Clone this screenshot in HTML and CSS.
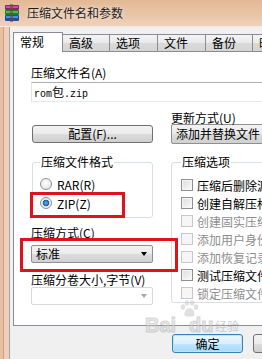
FILE: index.html
```html
<!DOCTYPE html>
<html>
<head>
<meta charset="utf-8">
<link rel="stylesheet" href="styles.css">
</head>
<body>
<div class="window">
  <div class="titlebar">
    <svg class="app-icon" width="16" height="18" viewBox="0 0 16 18">
      <rect x="1" y="1" width="14" height="5" rx="1" fill="#8a2468"/>
      <rect x="2" y="2" width="12" height="2" fill="#c9509a"/>
      <rect x="1" y="6" width="14" height="5" rx="1" fill="#237a30"/>
      <rect x="2" y="7" width="12" height="2" fill="#55b957"/>
      <rect x="1" y="11" width="14" height="6" rx="1" fill="#1f4f9e"/>
      <rect x="2" y="12" width="12" height="2" fill="#4f8fe0"/>
      <rect x="6" y="0" width="3" height="18" fill="#6b4a2a" opacity=".55"/>
    </svg>
    <span class="title">压缩文件名和参数</span>
  </div>
  <div class="main">
    <div class="frame-left"></div>
    <div class="dialog">
      <div class="tabs">
        <div class="tab active">常规</div>
        <div class="tab w48">高级</div>
        <div class="tab">选项</div>
        <div class="tab">文件</div>
        <div class="tab w48">备份</div>
        <div class="tab">时间</div>
      </div>
      <div class="panel">
        <div class="label first">压缩文件名(A)</div>
        <div class="textbox"><span class="mono">rom<span class="cjk">包</span>.zip</span></div>
        <div class="row">
          <div class="col-left">
            <div class="button config">配置(F)...</div>
          </div>
          <div class="col-right">
            <div class="label small">更新方式(U)</div>
            <div class="combo wide"><span>添加并替换文件</span><span class="arrow"></span></div>
          </div>
        </div>
        <div class="row row3">
          <div class="col-left">
            <fieldset class="group format">
              <legend>压缩文件格式</legend>
              <div class="radio-row first"><span class="radio"></span><span>RAR(R)</span></div>
              <div class="radio-row"><span class="radio checked"></span><span>ZIP(Z)</span></div>
            </fieldset>
            <div class="label method">压缩方式(C)</div>
            <div class="combo method-combo"><span>标准</span><span class="arrow"></span></div>
            <div class="label volume">压缩分卷大小,字节(V)</div>
            <div class="combo disabled"><span></span><span class="arrow"></span></div>
          </div>
          <div class="col-right">
            <fieldset class="group options">
              <legend>压缩选项</legend>
              <div class="check-row first"><span class="check"></span><span>压缩后删除源文件</span></div>
              <div class="check-row"><span class="check"></span><span>创建自解压格式压缩文件</span></div>
              <div class="check-row disabled"><span class="check"></span><span>创建固实压缩文件</span></div>
              <div class="check-row disabled"><span class="check"></span><span>添加用户身份校验信息</span></div>
              <div class="check-row disabled"><span class="check"></span><span>添加恢复记录</span></div>
              <div class="check-row"><span class="check"></span><span>测试压缩文件</span></div>
              <div class="check-row disabled"><span class="check"></span><span>锁定压缩文件</span></div>
            </fieldset>
          </div>
        </div>
      </div>
      <div class="buttons">
        <div class="button ok">确定</div>
        <div class="button cancel">取消</div>
      </div>
    </div>
  </div>
  <div class="mark mark-zip"></div>
  <div class="mark mark-method"></div>
  <div class="watermark">
    <svg class="paw" width="20" height="18" viewBox="0 0 20 18">
      <ellipse cx="4" cy="7" rx="2.2" ry="2.8" fill="#c8c8c8"/>
      <ellipse cx="8" cy="3" rx="2.2" ry="2.8" fill="#c8c8c8"/>
      <ellipse cx="13" cy="3" rx="2.2" ry="2.8" fill="#c8c8c8"/>
      <ellipse cx="17" cy="7" rx="2.2" ry="2.8" fill="#c8c8c8"/>
      <path d="M10.5 8 C7 8 5 12 5.5 15 C6 17 9 16.5 10.5 16.5 C12 16.5 15 17 15.5 15 C16 12 14 8 10.5 8Z" fill="#c8c8c8"/>
    </svg>
    <span class="wm-bai">Bai</span><span class="wm-du">du</span><span class="wm-jy">经验</span>
  </div>
</div>
</body>
</html>
```
FILE: styles.css
```css
* { box-sizing: border-box; }
html, body { margin: 0; padding: 0; }
body {
  width: 262px;
  height: 359px;
  overflow: hidden;
  font-family: "Noto Sans CJK SC", "Noto Sans", sans-serif;
  font-size: 12px;
  color: #000;
  background: #f0f0f0;
}
.window {
  position: relative;
  width: 262px;
  height: 359px;
  overflow: hidden;
  display: flex;
  flex-direction: column;
  background: #e9c7aa;
}
.titlebar {
  height: 27px;
  flex: none;
  display: flex;
  align-items: center;
  gap: 7px;
  padding: 0 0 1px 4px;
  background: linear-gradient(#e3b995, #e9c6a9 60%, #eed2bc);
  border-bottom: 1px solid #f5e9df;
}
.app-icon { flex: none; }
.title {
  font-size: 12px;
  line-height: 14px;
  color: #1e1e1e;
  text-shadow: 0 0 5px rgba(255, 255, 255, .8);
}
.main { flex: 1; display: flex; min-height: 0; }
.frame-left {
  width: 10px;
  flex: none;
  background: linear-gradient(90deg, #e7c0a5 0, #e7c0a5 3px, #d49c7c 3px, #d49c7c 4px, #eed1bd 4px, #eed1bd 9px, #a3a3a3 9px);
}
.dialog {
  width: 340px;
  flex: none;
  padding-left: 3px;
  display: flex;
  flex-direction: column;
  background: #f0f0f0;
}
.tabs {
  height: 24px;
  flex: none;
  display: flex;
  align-items: flex-end;
}
.tab {
  width: 49px;
  height: 17px;
  flex: none;
  margin-left: -1px;
  padding-left: 6px;
  border: 1px solid #898c95;
  border-bottom: none;
  background: linear-gradient(#f4f4f4, #e9e9e9 50%, #dadada 50%, #d4d4d4);
  line-height: 15px;
  white-space: nowrap;
}
.tab.w48 { width: 48px; }
.tab.active {
  width: 50px;
  height: 20px;
  margin-left: 0;
  margin-bottom: -1px;
  background: #fff;
  position: relative;
  z-index: 1;
  line-height: 15px;
  padding-top: 1px;
}
.panel {
  height: 275px;
  flex: none;
  background: #fff;
  border: 1px solid #898c95;
  padding: 0 0 0 17px;
}
.label {
  height: 14px;
  line-height: 14px;
  white-space: nowrap;
}
.label.first { margin-top: 14px; }
.label.small { height: 12px; line-height: 11px; }
.label.method { margin-top: 8px; }
.label.volume { margin-top: 10px; }
.textbox {
  margin-top: 2px;
  height: 20px;
  width: 300px;
  border: 1px solid;
  border-color: #abadb3 #dbdfe6 #e3e9ef #e2e3ea;
  padding-left: 2px;
  line-height: 18px;
}
.mono {
  font-family: "Liberation Mono", "Noto Sans CJK SC", monospace;
  font-size: 10px;
}
.cjk { font-family: "Noto Sans CJK SC", sans-serif; font-size: 12px; }
.row { display: flex; margin-top: 10px; }
.row.row3 { margin-top: 11px; }
.col-left { width: 122px; flex: none; }
.col-right { width: 200px; flex: none; margin-left: 18px; }
.button {
  height: 18px;
  border: 1px solid #707070;
  border-radius: 3px;
  background: linear-gradient(#f2f2f2, #ebebeb 50%, #dddddd 50%, #cfcfcf);
  display: flex;
  align-items: center;
  justify-content: center;
  line-height: 14px;
  white-space: nowrap;
}
.button.config { margin: 13px 0 0 1px; width: 121px; }
.combo {
  height: 18px;
  border: 1px solid #8e8f8f;
  border-radius: 2px;
  background: linear-gradient(#f2f2f2, #ebebeb 50%, #dddddd 50%, #d0d0d0);
  display: flex;
  align-items: center;
  justify-content: space-between;
  padding: 0 5px 0 4px;
  white-space: nowrap;
  line-height: 14px;
}
.combo.wide { height: 20px; width: 200px; }
.combo.method-combo { margin-top: 5px; }
.combo.disabled {
  background: #fff;
  border-color: #d9d9d9;
}
.arrow {
  width: 0;
  height: 0;
  border-left: 3.5px solid transparent;
  border-right: 3.5px solid transparent;
  border-top: 4px solid #000;
  flex: none;
}
.combo.disabled .arrow { border-top-color: #a5a5a5; }
.group {
  margin: 0;
  min-width: 0;
  border: 1px solid #d5dfe5;
  border-radius: 3px;
}
.group legend {
  padding: 0 1px;
  height: 14px;
  line-height: 14px;
  white-space: nowrap;
}
.group.format {
  margin-left: 1px;
  width: 121px;
  padding: 0 0 6px 7px;
}
.group.options {
  width: 180px;
  padding: 0 0 0 9px;
}
.radio-row {
  height: 16px;
  display: flex;
  align-items: center;
  gap: 5px;
  margin-top: 3px;
  white-space: nowrap;
}
.radio-row.first { margin-top: 7px; }
.radio {
  width: 12px;
  height: 12px;
  border-radius: 50%;
  border: 1px solid #8e8f8f;
  background: radial-gradient(circle at 45% 40%, #fff, #dedede);
  flex: none;
}
.radio.checked {
  background: radial-gradient(circle at 50% 50%, #63b3ee 0, #1a5fa6 3px, #e8e8e8 3.6px, #f4f4f4 6px);
}
.check-row {
  height: 18px;
  display: flex;
  align-items: center;
  gap: 4px;
  white-space: nowrap;
}
.check-row.first { margin-top: 7px; }
.check {
  width: 12px;
  height: 12px;
  flex: none;
  border: 1px solid #8e8f8f;
  background: linear-gradient(135deg, #dcdcdc, #fbfbfb);
  box-shadow: inset 0 0 0 1px #f6f6f6;
}
.check-row.disabled { color: #8d8d8d; }
.check-row.disabled .check {
  border-color: #c8c8c8;
  background: #f6f6f6;
  box-shadow: none;
}
.buttons {
  display: flex;
  gap: 10px;
  margin-top: 8px;
  padding-left: 159px;
}
.buttons .button { width: 71px; height: 19px; flex: none; }
.button.ok {
  border-color: #3c7fb1;
  box-shadow: inset 0 0 0 1px #bde6f8;
  background: linear-gradient(#eaf6fd, #d9f0fc 50%, #bee6fd 50%, #a7d9f5);
}
.mark {
  position: absolute;
  border: 3px solid #e0121c;
}
.mark-zip { left: 30px; top: 192px; width: 95px; height: 26px; }
.mark-method { left: 20px; top: 238px; width: 158px; height: 34px; }
.watermark {
  position: absolute;
  left: 143px;
  top: 300px;
  width: 100px;
  height: 40px;
  opacity: .55;
  font-family: "Liberation Sans", Arial, sans-serif;
}
.paw { position: absolute; left: 36px; top: 0; }
.wm-bai, .wm-du {
  position: absolute;
  top: 15px;
  font-size: 20px;
  font-weight: bold;
  color: #d6d6d6;
  -webkit-text-stroke: 1px #b4b4b4;
  line-height: 20px;
}
.wm-bai { left: 2px; }
.wm-du { left: 46px; }
.wm-jy {
  position: absolute;
  left: 72px;
  top: 19px;
  font-family: "Noto Sans CJK SC", sans-serif;
  font-size: 12px;
  line-height: 14px;
  color: #a8a8a8;
}
```
